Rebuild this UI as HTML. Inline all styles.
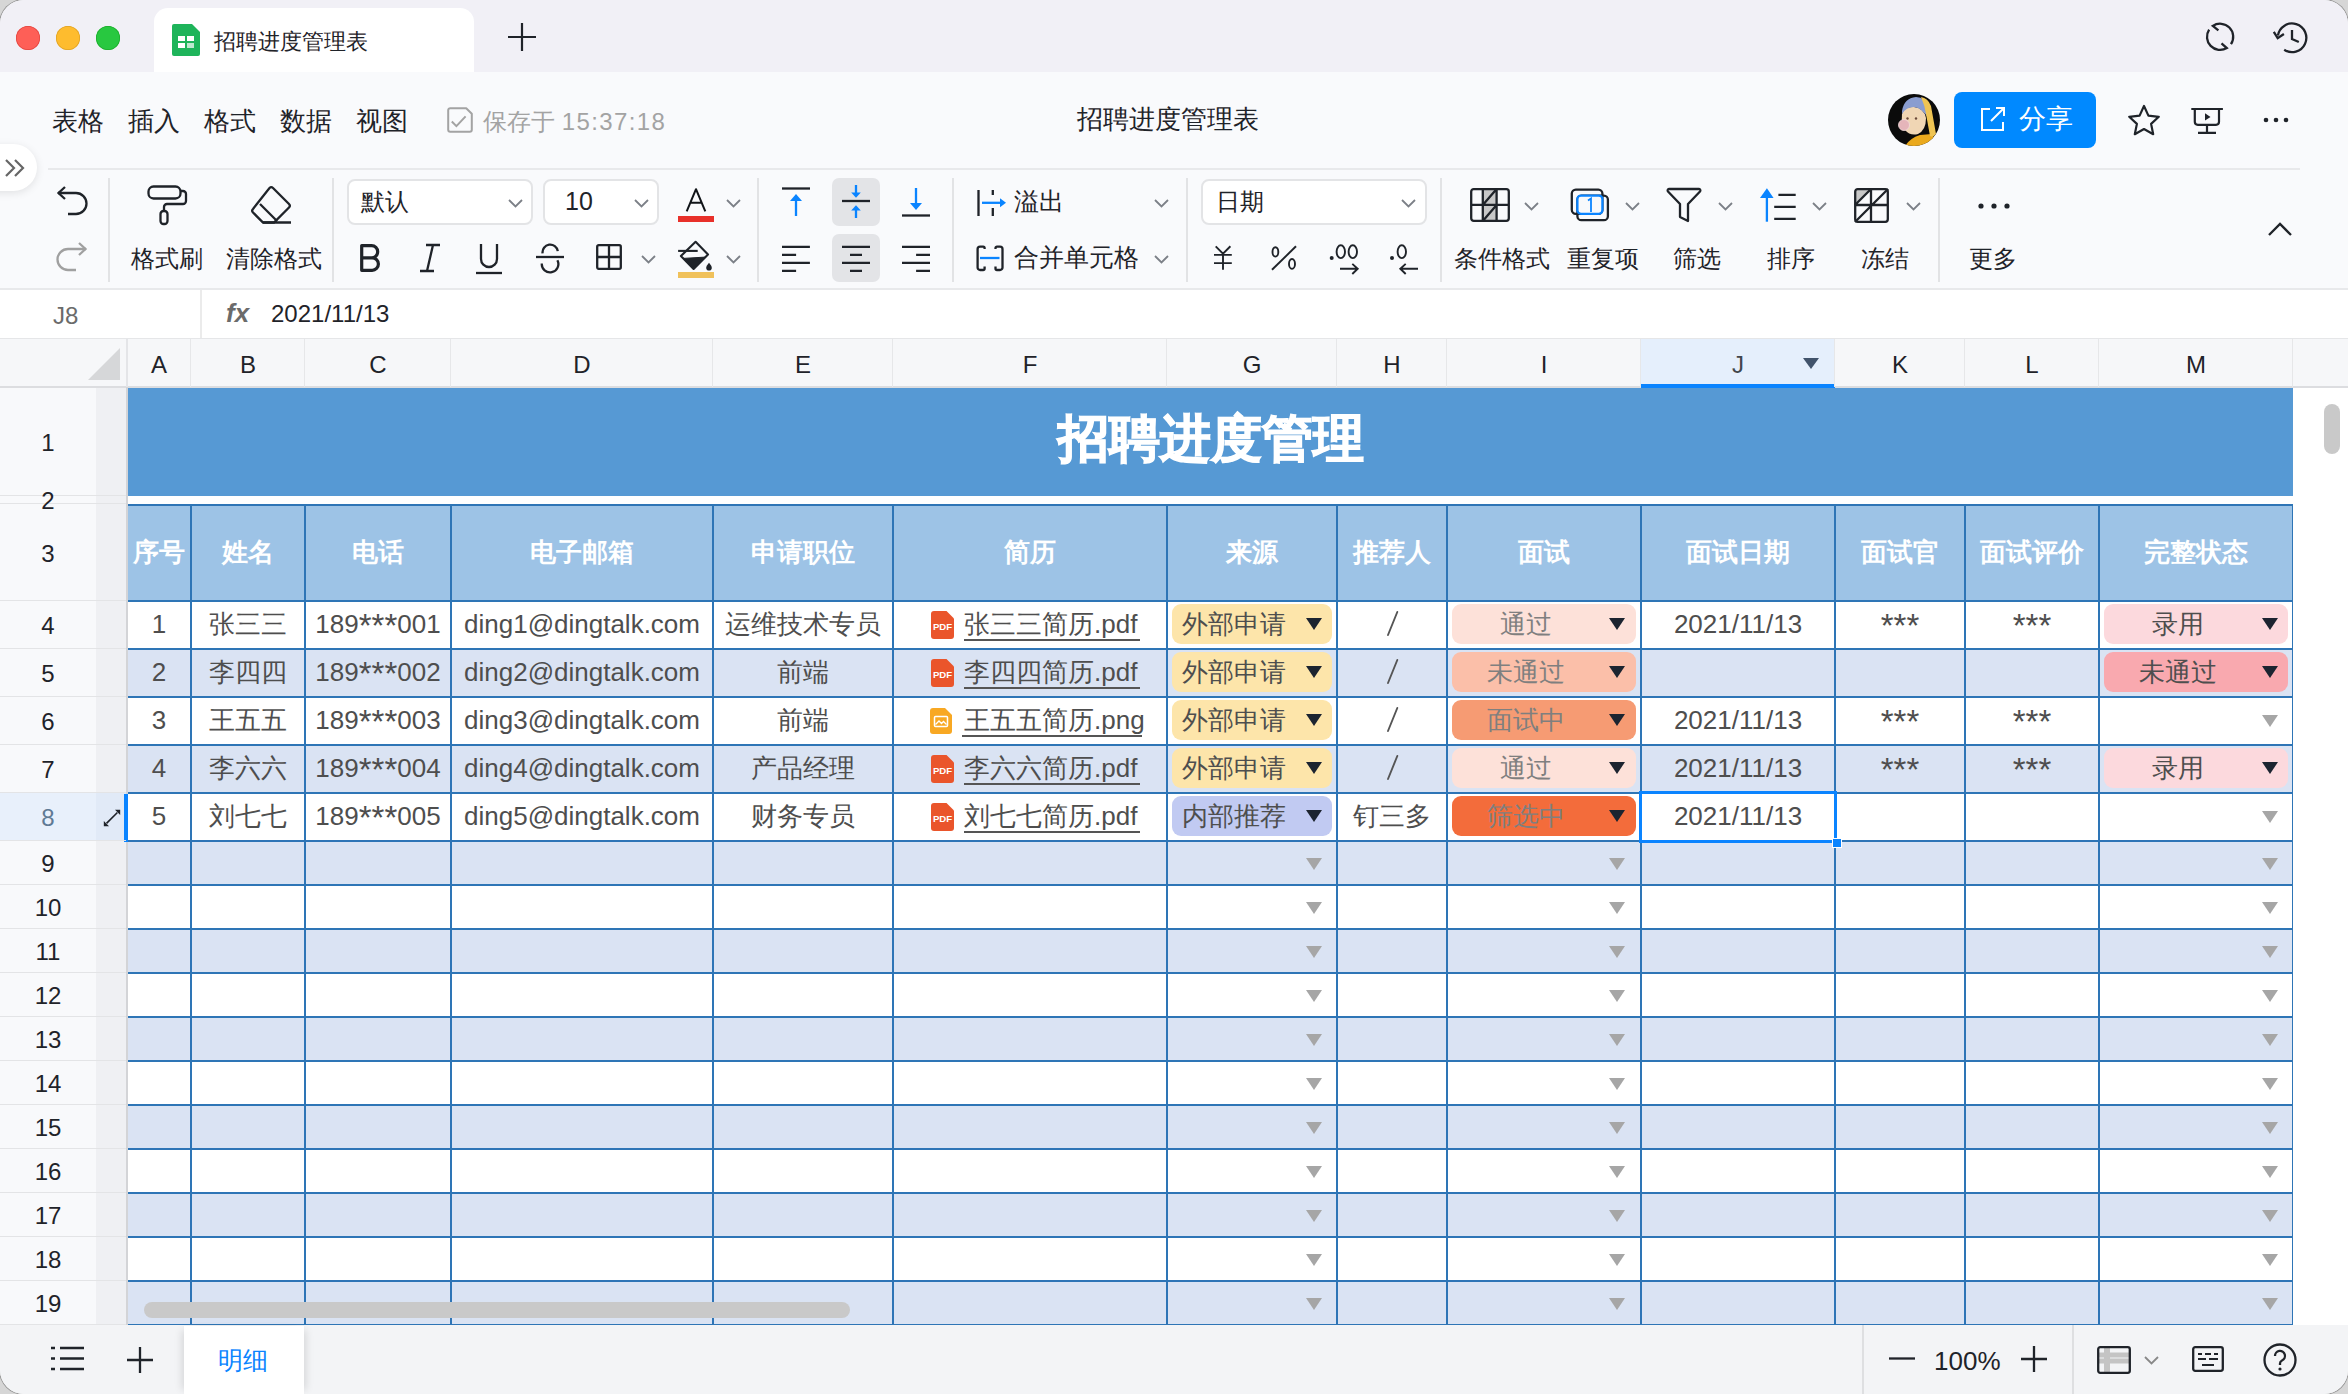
<!DOCTYPE html><html><head><meta charset="utf-8"><style>
*{box-sizing:border-box;margin:0;padding:0}
html,body{width:2348px;height:1394px;overflow:hidden;background:#d6d6d6;font-family:"Liberation Sans",sans-serif}
#win{position:absolute;left:0;top:0;width:2348px;height:1394px;border-radius:24px;overflow:hidden;background:#f9fafc;box-shadow:0 0 0 1px rgba(0,0,0,0.3)}
.a{position:absolute}
.t{position:absolute;white-space:nowrap;line-height:1}
svg{position:absolute;overflow:visible}
.ast{font-size:33px;vertical-align:-4px;line-height:0}
</style></head><body><div id="win">

<div class="a" style="left:0;top:0;width:2348px;height:72px;background:#f1f0f6"></div>
<div class="a" style="left:16px;top:26px;width:24px;height:24px;border-radius:50%;background:#fe5f57;box-shadow:inset 0 0 0 0.7px #e0443e"></div>
<div class="a" style="left:56px;top:26px;width:24px;height:24px;border-radius:50%;background:#febc2e;box-shadow:inset 0 0 0 0.7px #dea123"></div>
<div class="a" style="left:96px;top:26px;width:24px;height:24px;border-radius:50%;background:#28c840;box-shadow:inset 0 0 0 0.7px #1aab29"></div>
<div class="a" style="left:154px;top:8px;width:320px;height:64px;background:#fff;border-radius:14px 14px 0 0"></div>
<svg style="left:172px;top:24px" width="28" height="32" viewBox="0 0 28 32"><path d="M2 0H20L28 8V30a2 2 0 0 1-2 2H2a2 2 0 0 1-2-2V2a2 2 0 0 1 2-2z" fill="#1eb45a"/><rect x="6" y="12" width="7" height="5" fill="#fff"/><rect x="15" y="12" width="7" height="5" fill="#fff"/><rect x="6" y="19" width="7" height="5" fill="#fff"/><rect x="15" y="19" width="7" height="5" fill="#bfe8cf"/></svg>
<div class="t" style="left:214px;top:31px;font-size:22px;color:#1f2329">招聘进度管理表</div>
<svg style="left:508px;top:23px" width="28" height="28"><path d="M14 0V28M0 14H28" stroke="#1f2329" stroke-width="2.2"/></svg>
<svg style="left:2205px;top:22px" width="30" height="30" viewBox="0 0 30 30"><path d="M13.4 8.4L7.78 3.94A13.1 13.1 0 0 1 25.96 22.12M4.11 7.66A13.1 13.1 0 0 0 21.85 26.03L16.5 21.3" fill="none" stroke="#1f2329" stroke-width="2.3"/></svg>
<svg style="left:2274px;top:21px" width="34" height="34" viewBox="0 0 34 34"><path d="M10.2 28.8A14.3 14.3 0 1 0 3.9 14.5" fill="none" stroke="#1f2329" stroke-width="2.3"/><path d="M-0.2 10.9L3.7 17.2 9.9 13M18 9.1V18L24.8 21" fill="none" stroke="#1f2329" stroke-width="2.3"/></svg>
<div class="t" style="left:52px;top:108px;font-size:26px;color:#1f2329">表格</div>
<div class="t" style="left:128px;top:108px;font-size:26px;color:#1f2329">插入</div>
<div class="t" style="left:204px;top:108px;font-size:26px;color:#1f2329">格式</div>
<div class="t" style="left:280px;top:108px;font-size:26px;color:#1f2329">数据</div>
<div class="t" style="left:356px;top:108px;font-size:26px;color:#1f2329">视图</div>
<svg style="left:447px;top:107px" width="26" height="26" viewBox="0 0 26 26"><path d="M3.2 1.2H19.2L24.8 6.8V22.8A2 2 0 0 1 22.8 24.8H3.2A2 2 0 0 1 1.2 22.8V3.2A2 2 0 0 1 3.2 1.2Z" fill="none" stroke="#a3a3a3" stroke-width="2" stroke-linejoin="round"/><path d="M4.8 14.5L9.4 19.1 18.6 9.4" fill="none" stroke="#a3a3a3" stroke-width="2"/></svg>
<div class="t" style="left:483px;top:110px;font-size:24px;color:#a3a3a3">保存于 <span style="letter-spacing:1.4px">15:37:18</span></div>
<div class="t" style="left:1077px;top:106px;font-size:26px;color:#1f2329">招聘进度管理表</div>
<svg style="left:1888px;top:94px" width="52" height="52" viewBox="0 0 52 52"><defs><clipPath id="cav"><circle cx="26" cy="26" r="26"/></clipPath></defs><g clip-path="url(#cav)"><rect width="52" height="52" fill="#0b0b0b"/><path d="M17 52Q22 44 32 41L44 40Q48 46 45 52Z" fill="#eaa91d"/><path d="M14 20Q16 12 26 13Q36 14 38 24Q38 36 30 40Q22 42 17 36Q13 30 14 20Z" fill="#f0d6b4"/><path d="M14 17Q16 4 28 3Q38 3 40 14L40 24Q34 14 26 13Q18 13 14 20Z" fill="#8a9dd0"/><path d="M33 3Q40 4 43 12L48 40Q45 44 42 42L38 20Q37 12 33 3Z" fill="#efc453"/><circle cx="19.5" cy="24.5" r="1.2" fill="#6b4a3a"/><circle cx="28" cy="24.5" r="1.2" fill="#6b4a3a"/><circle cx="16" cy="31" r="5.5" fill="#e5b5ba" stroke="#f3dcdc" stroke-width="0.8"/></g></svg>
<div class="a" style="left:1954px;top:92px;width:142px;height:56px;border-radius:8px;background:#0089ff"></div>
<svg style="left:1980px;top:106px" width="26" height="26" viewBox="0 0 26 26"><path d="M10 3H2V24H23V16" fill="none" stroke="#fff" stroke-width="2"/><path d="M11 15L24 2M16 2H24V10" fill="none" stroke="#fff" stroke-width="2"/></svg>
<div class="t" style="left:2019px;top:106px;font-size:27px;color:#fff">分享</div>
<svg style="left:2127px;top:104px" width="34" height="34" viewBox="0 0 34 34"><path d="M17 2l4.4 9.6 10.4 1.2-7.7 7.1 2.1 10.3L17 25l-9.2 5.2 2.1-10.3L2.2 12.8l10.4-1.2z" fill="none" stroke="#1f2329" stroke-width="2.2" stroke-linejoin="round"/></svg>
<svg style="left:2190px;top:104px" width="34" height="34" viewBox="0 0 34 34"><path d="M1.3 5H32.9M4.8 5V17.8A3 3 0 0 0 7.8 20.8H26A3 3 0 0 0 29 17.8V5M17 20.8V28.9M8 28.9H26" fill="none" stroke="#1f2329" stroke-width="2.2"/><path d="M15 9.3V16.6L20.5 13z" fill="#1f2329"/></svg>
<svg style="left:2263px;top:117px" width="28" height="6"><circle cx="3" cy="3" r="2.3" fill="#1f2329"/><circle cx="13" cy="3" r="2.3" fill="#1f2329"/><circle cx="23" cy="3" r="2.3" fill="#1f2329"/></svg>
<div class="a" style="left:-30px;top:144px;width:67px;height:47px;border-radius:23.5px;background:#fff;box-shadow:0 2px 8px rgba(0,0,0,0.10)"></div>
<svg style="left:5px;top:159px" width="20" height="18" viewBox="0 0 20 18"><path d="M1 1l8 8-8 8M10 1l8 8-8 8" fill="none" stroke="#666" stroke-width="2.2"/></svg>
<div class="a" style="left:48px;top:168px;width:2252px;height:2px;background:#e8e9eb"></div>
<div class="a" style="left:0;top:288px;width:2348px;height:2px;background:#e8e9eb"></div>
<div class="a" style="left:108px;top:178px;width:2px;height:104px;background:#e2e3e5"></div>
<div class="a" style="left:332px;top:178px;width:2px;height:104px;background:#e2e3e5"></div>
<div class="a" style="left:757px;top:178px;width:2px;height:104px;background:#e2e3e5"></div>
<div class="a" style="left:952px;top:178px;width:2px;height:104px;background:#e2e3e5"></div>
<div class="a" style="left:1186px;top:178px;width:2px;height:104px;background:#e2e3e5"></div>
<div class="a" style="left:1440px;top:178px;width:2px;height:104px;background:#e2e3e5"></div>
<div class="a" style="left:1938px;top:178px;width:2px;height:104px;background:#e2e3e5"></div>
<svg style="left:56px;top:186px" width="32" height="30" viewBox="0 0 32 30"><path d="M2 7H20A10 10 0 0 1 20 28H12" fill="none" stroke="#1f2329" stroke-width="2.3"/><path d="M9 1L2.5 7 9 13" fill="none" stroke="#1f2329" stroke-width="2.3"/></svg>
<svg style="left:56px;top:242px" width="32" height="30" viewBox="0 0 32 30"><path d="M30 7H12A10 10 0 0 0 12 28H20" fill="none" stroke="#a0a0a0" stroke-width="2.3"/><path d="M23 1L29.5 7 23 13" fill="none" stroke="#a0a0a0" stroke-width="2.3"/></svg>
<svg style="left:147px;top:185px" width="42" height="42" viewBox="0 0 42 42"><rect x="1.5" y="1.5" width="32" height="12" rx="5" fill="none" stroke="#1f2329" stroke-width="2.3"/><path d="M34 6H36a3 3 0 0 1 3 3V16a3 3 0 0 1-3 3H20a3 3 0 0 0-3 3V26" fill="none" stroke="#1f2329" stroke-width="2.3"/><rect x="13.5" y="26" width="7" height="13" rx="3" fill="none" stroke="#1f2329" stroke-width="2.3"/></svg>
<div class="t" style="left:131px;top:247px;font-size:24px;color:#1f2329">格式刷</div>
<svg style="left:251px;top:186px" width="42" height="40" viewBox="0 0 42 40"><path d="M22 2L38 18a2.5 2.5 0 0 1 0 3.5L23 36.5H12L2 26.5a2.5 2.5 0 0 1 0-3.5L18.5 2a2.5 2.5 0 0 1 3.5 0z" fill="none" stroke="#1f2329" stroke-width="2.3"/><path d="M9 18L26 35M12 36.5H40" fill="none" stroke="#1f2329" stroke-width="2.3"/></svg>
<div class="t" style="left:226px;top:247px;font-size:24px;color:#1f2329">清除格式</div>
<div class="a" style="left:347px;top:179px;width:186px;height:46px;border:2px solid #e3e4e6;border-radius:8px;background:#fff"></div>
<div class="t" style="left:361px;top:190px;font-size:24px;color:#1f2329">默认</div>
<svg style="left:508px;top:199px" width="15" height="9" viewBox="0 0 15 9"><path d="M1 1l6.5 6.5L14 1" fill="none" stroke="#7c8087" stroke-width="1.8"/></svg>
<div class="a" style="left:543px;top:179px;width:116px;height:46px;border:2px solid #e3e4e6;border-radius:8px;background:#fff"></div>
<div class="t" style="left:565px;top:189px;font-size:25px;color:#1f2329">10</div>
<svg style="left:634px;top:199px" width="15" height="9" viewBox="0 0 15 9"><path d="M1 1l6.5 6.5L14 1" fill="none" stroke="#7c8087" stroke-width="1.8"/></svg>
<svg style="left:680px;top:186px" width="32" height="28" viewBox="0 0 32 28"><path d="M6.7 25.4L16 3.2 25.3 25.4M10.2 16.8H21.8" fill="none" stroke="#111418" stroke-width="2" stroke-linejoin="round"/></svg>
<div class="a" style="left:678px;top:216px;width:36px;height:6px;background:#e8302a"></div>
<svg style="left:726px;top:199px" width="15" height="9" viewBox="0 0 15 9"><path d="M1 1l6.5 6.5L14 1" fill="none" stroke="#7c8087" stroke-width="1.8"/></svg>
<svg style="left:358px;top:242px" width="26" height="32" viewBox="0 0 26 32"><path d="M3.7 3.6H13.6A6.1 6.1 0 0 1 13.6 15.8H3.7ZM3.7 15.8H14.15A6.25 6.25 0 0 1 14.15 28.3H3.7Z" fill="none" stroke="#1f2329" stroke-width="3.2" stroke-linejoin="round"/></svg>
<svg style="left:418px;top:244px" width="24" height="28" viewBox="0 0 24 28"><path d="M8 1H22M2 27H16M15 1L9 27" fill="none" stroke="#1f2329" stroke-width="2.3"/></svg>
<svg style="left:475px;top:244px" width="28" height="32" viewBox="0 0 28 32"><path d="M6 0V15A8 8 0 0 0 22 15V0" fill="none" stroke="#1f2329" stroke-width="2.3"/><path d="M1 29H27" stroke="#1f2329" stroke-width="2.3"/></svg>
<svg style="left:535px;top:243px" width="30" height="30" viewBox="0 0 30 30"><path d="M22.8 8.2A7.3 7.3 0 1 0 7.6 10.4M6.8 20.5A8.3 8.3 0 1 0 22.4 17.2" fill="none" stroke="#1f2329" stroke-width="2.3"/><path d="M1 14H29" stroke="#1f2329" stroke-width="2.3"/></svg>
<svg style="left:596px;top:244px" width="26" height="26" viewBox="0 0 26 26"><rect x="1.2" y="1.2" width="23.6" height="23.6" rx="1.5" fill="none" stroke="#1f2329" stroke-width="2.3"/><path d="M13 1V25M1 13H25" stroke="#1f2329" stroke-width="2.3"/></svg>
<svg style="left:641px;top:255px" width="15" height="9" viewBox="0 0 15 9"><path d="M1 1l6.5 6.5L14 1" fill="none" stroke="#7c8087" stroke-width="1.8"/></svg>
<svg style="left:677px;top:240px" width="38" height="32" viewBox="0 0 38 32"><path d="M6.2 18.4L28.3 17.1 16.6 29z" fill="#1f2329" stroke="#1f2329" stroke-width="1" stroke-linejoin="round"/><path d="M18.6 1.8L31 14.5 16.6 29 3.9 16.1Z" fill="none" stroke="#1f2329" stroke-width="2.1" stroke-linejoin="round"/><path d="M1.1 10.9H20.7" stroke="#1f2329" stroke-width="2.1"/><path d="M32 22.7q-2.8 3.2-2.8 5a2.8 2.8 0 0 0 5.6 0q0-1.8-2.8-5z" fill="#1f2329"/></svg>
<div class="a" style="left:678px;top:272px;width:36px;height:6px;background:#f0c15b"></div>
<svg style="left:726px;top:255px" width="15" height="9" viewBox="0 0 15 9"><path d="M1 1l6.5 6.5L14 1" fill="none" stroke="#7c8087" stroke-width="1.8"/></svg>
<div class="a" style="left:832px;top:178px;width:48px;height:48px;border-radius:7px;background:#e3e4e7"></div>
<div class="a" style="left:832px;top:234px;width:48px;height:48px;border-radius:7px;background:#e3e4e7"></div>
<svg style="left:781px;top:187px" width="30" height="30" viewBox="0 0 30 30"><path d="M1 1.5H29" stroke="#1f2329" stroke-width="2.3"/><path d="M15 10V29" stroke="#0a84ff" stroke-width="2.3"/><path d="M9 14l6-7 6 7z" fill="#0a84ff"/></svg>
<svg style="left:841px;top:184px" width="30" height="36" viewBox="0 0 30 36"><path d="M1 17H29" stroke="#1f2329" stroke-width="2.3"/><path d="M15 1V10M15 25V34" stroke="#0a84ff" stroke-width="2.3"/><path d="M10.2 8.5L15 13.7 19.8 8.5z" fill="#0a84ff"/><path d="M10.2 26.5L15 21.3 19.8 26.5z" fill="#0a84ff"/></svg>
<svg style="left:901px;top:187px" width="30" height="30" viewBox="0 0 30 30"><path d="M1 28.5H29" stroke="#1f2329" stroke-width="2.3"/><path d="M15 1V20" stroke="#0a84ff" stroke-width="2.3"/><path d="M9 16l6 7 6-7z" fill="#0a84ff"/></svg>
<svg style="left:781px;top:245px" width="30" height="28" viewBox="0 0 30 28"><path d="M1 1.9H28.9M1 9.9H15.1M1 17.9H28.9M1 25.9H15.1" stroke="#1f2329" stroke-width="2.3"/></svg>
<svg style="left:841px;top:245px" width="30" height="28" viewBox="0 0 30 28"><path d="M1 1.9H29M9 9.9H21M1 17.9H29M9 25.9H21" stroke="#1f2329" stroke-width="2.3"/></svg>
<svg style="left:901px;top:245px" width="30" height="28" viewBox="0 0 30 28"><path d="M1 1.9H29M15.1 9.9H29M1 17.9H29M15.1 25.9H29" stroke="#1f2329" stroke-width="2.3"/></svg>
<svg style="left:977px;top:189px" width="30" height="28" viewBox="0 0 30 28"><path d="M1.5 1.1V26.9M15.8 1.1V6M15.8 19V26.9" stroke="#1f2329" stroke-width="2.3"/><path d="M5 13.8H24" stroke="#0a84ff" stroke-width="2.3"/><path d="M23 9.3L29 13.8 23 18.3z" fill="#0a84ff"/></svg>
<div class="t" style="left:1014px;top:189px;font-size:25px;color:#1f2329">溢出</div>
<svg style="left:1154px;top:199px" width="15" height="9" viewBox="0 0 15 9"><path d="M1 1l6.5 6.5L14 1" fill="none" stroke="#7c8087" stroke-width="1.8"/></svg>
<svg style="left:976px;top:244px" width="30" height="30" viewBox="0 0 30 30"><path d="M8.6 5.1V4.1A1.5 1.5 0 0 0 7.1 2.6H4.1A2.5 2.5 0 0 0 1.6 5.1V23.5A2.5 2.5 0 0 0 4.1 26H7.1A1.5 1.5 0 0 0 8.6 24.5V22.5M19.5 5.1V4.1A1.5 1.5 0 0 1 21 2.6H24A2.5 2.5 0 0 1 26.5 5.1V23.5A2.5 2.5 0 0 1 24 26H21A1.5 1.5 0 0 1 19.5 24.5V22.5" fill="none" stroke="#1f2329" stroke-width="2.3"/><path d="M4 14H23.5" stroke="#0a84ff" stroke-width="2.3"/></svg>
<div class="t" style="left:1014px;top:245px;font-size:25px;color:#1f2329">合并单元格</div>
<svg style="left:1154px;top:255px" width="15" height="9" viewBox="0 0 15 9"><path d="M1 1l6.5 6.5L14 1" fill="none" stroke="#7c8087" stroke-width="1.8"/></svg>
<div class="a" style="left:1201px;top:179px;width:226px;height:46px;border:2px solid #e3e4e6;border-radius:8px;background:#fff"></div>
<div class="t" style="left:1216px;top:190px;font-size:24px;color:#1f2329">日期</div>
<svg style="left:1401px;top:199px" width="15" height="9" viewBox="0 0 15 9"><path d="M1 1l6.5 6.5L14 1" fill="none" stroke="#7c8087" stroke-width="1.8"/></svg>
<svg style="left:1212px;top:244px" width="22" height="28" viewBox="0 0 22 28"><path d="M3.7 2.3L11 9.6 18.4 2.3M11 9.6V25.8M2 10.9H19.8M2 19.1H19.8" fill="none" stroke="#1f2329" stroke-width="1.9"/></svg>
<svg style="left:1268px;top:244px" width="32" height="28" viewBox="0 0 32 28"><ellipse cx="7.4" cy="7.9" rx="2.9" ry="4.7" fill="none" stroke="#1f2329" stroke-width="1.9"/><path d="M28 2.3L4 25.8" stroke="#1f2329" stroke-width="1.9"/><ellipse cx="24" cy="19.9" rx="3" ry="4.9" fill="none" stroke="#1f2329" stroke-width="1.9"/></svg>
<svg style="left:1328px;top:244px" width="32" height="32" viewBox="0 0 32 32"><circle cx="3.7" cy="14" r="2" fill="#1f2329"/><ellipse cx="12.8" cy="7.7" rx="4.2" ry="6.4" fill="none" stroke="#1f2329" stroke-width="1.9"/><ellipse cx="24.8" cy="7.7" rx="4.2" ry="6.4" fill="none" stroke="#1f2329" stroke-width="1.9"/><path d="M12 24.8H29.7M24.3 19.9L29.7 24.8 24.3 30" fill="none" stroke="#1f2329" stroke-width="1.9"/></svg>
<svg style="left:1388px;top:244px" width="32" height="32" viewBox="0 0 32 32"><circle cx="4" cy="14" r="2" fill="#1f2329"/><ellipse cx="13.8" cy="7.7" rx="4.2" ry="6.4" fill="none" stroke="#1f2329" stroke-width="1.9"/><path d="M12.3 24.8H30M17.7 19.9L12.3 24.8 17.7 30" fill="none" stroke="#1f2329" stroke-width="1.9"/></svg>
<svg style="left:1470px;top:188px" width="40" height="34" viewBox="0 0 40 34"><rect x="12.8" y="1" width="13.8" height="32" fill="#c8c8c8"/><rect x="1.2" y="1.2" width="37.6" height="31.6" rx="2.5" fill="none" stroke="#1f2329" stroke-width="2.3"/><path d="M12.8 1V33M26.6 1V33M1 16.9H39M12.8 16.9L26.6 1M12.8 33L26.6 16.9" stroke="#1f2329" stroke-width="2.3"/></svg>
<svg style="left:1524px;top:202px" width="15" height="9" viewBox="0 0 15 9"><path d="M1 1l6.5 6.5L14 1" fill="none" stroke="#7c8087" stroke-width="1.8"/></svg>
<div class="t" style="left:1454px;top:247px;font-size:24px;color:#1f2329">条件格式</div>
<svg style="left:1569px;top:187px" width="42" height="36" viewBox="0 0 42 36"><rect x="2.8" y="2.6" width="30.6" height="24.2" rx="4" fill="none" stroke="#1f2329" stroke-width="2.3"/><rect x="8.4" y="8.6" width="30.5" height="24.6" rx="4" fill="none" stroke="#1f2329" stroke-width="2.3"/><rect x="8.4" y="8.6" width="25" height="18.2" rx="3.5" fill="#f8f9fb" stroke="#0a84ff" stroke-width="2.3"/><path d="M19 13.5L22 11.5V25" fill="none" stroke="#0a84ff" stroke-width="1.8"/></svg>
<svg style="left:1625px;top:202px" width="15" height="9" viewBox="0 0 15 9"><path d="M1 1l6.5 6.5L14 1" fill="none" stroke="#7c8087" stroke-width="1.8"/></svg>
<div class="t" style="left:1567px;top:247px;font-size:24px;color:#1f2329">重复项</div>
<svg style="left:1666px;top:187px" width="36" height="36" viewBox="0 0 36 36"><path d="M3 2H33a1.5 1.5 0 0 1 1 2.5L22 17V34L14 30V17L2 4.5A1.5 1.5 0 0 1 3 2z" fill="none" stroke="#1f2329" stroke-width="2.3" stroke-linejoin="round"/></svg>
<svg style="left:1718px;top:202px" width="15" height="9" viewBox="0 0 15 9"><path d="M1 1l6.5 6.5L14 1" fill="none" stroke="#7c8087" stroke-width="1.8"/></svg>
<div class="t" style="left:1673px;top:247px;font-size:24px;color:#1f2329">筛选</div>
<svg style="left:1759px;top:188px" width="38" height="36" viewBox="0 0 38 36"><path d="M7.9 8V33.7" stroke="#0a84ff" stroke-width="2.3"/><path d="M1 10L7.9 0.3 14.6 10z" fill="#0a84ff"/><path d="M19.4 6.9H36.7M15.2 18.8H36.7M15.2 30.8H36.7" stroke="#1f2329" stroke-width="2.3"/></svg>
<svg style="left:1812px;top:202px" width="15" height="9" viewBox="0 0 15 9"><path d="M1 1l6.5 6.5L14 1" fill="none" stroke="#7c8087" stroke-width="1.8"/></svg>
<div class="t" style="left:1767px;top:247px;font-size:24px;color:#1f2329">排序</div>
<svg style="left:1854px;top:188px" width="35" height="35" viewBox="0 0 35 35"><path d="M1 17V1H17z" fill="#c8c8c8"/><rect x="1.2" y="1.2" width="32.6" height="32.6" rx="2.5" fill="none" stroke="#1f2329" stroke-width="2.3"/><path d="M17 1V34M1 17H34M1 34L34 1M1 17L17 1" stroke="#1f2329" stroke-width="2.3"/></svg>
<svg style="left:1906px;top:202px" width="15" height="9" viewBox="0 0 15 9"><path d="M1 1l6.5 6.5L14 1" fill="none" stroke="#7c8087" stroke-width="1.8"/></svg>
<div class="t" style="left:1861px;top:247px;font-size:24px;color:#1f2329">冻结</div>
<svg style="left:1978px;top:203px" width="32" height="6"><circle cx="3" cy="3" r="2.6" fill="#1f2329"/><circle cx="16" cy="3" r="2.6" fill="#1f2329"/><circle cx="29" cy="3" r="2.6" fill="#1f2329"/></svg>
<div class="t" style="left:1969px;top:247px;font-size:24px;color:#1f2329">更多</div>
<svg style="left:2268px;top:222px" width="24" height="14" viewBox="0 0 24 14"><path d="M1 13L12 2 23 13" fill="none" stroke="#1f2329" stroke-width="2.3"/></svg>
<div class="a" style="left:0;top:290px;width:2348px;height:48px;background:#fff"></div>
<div class="a" style="left:200px;top:290px;width:2px;height:48px;background:#ebebeb"></div>
<div class="t" style="left:53px;top:304px;font-size:24px;color:#6b6b6b">J8</div>
<div class="t" style="left:226px;top:300px;font-size:26px;font-style:italic;font-weight:bold;color:#6b6b6b">fx</div>
<div class="t" style="left:271px;top:302px;font-size:24px;color:#1f2329">2021/11/13</div>
<div class="a" style="left:0;top:338px;width:2348px;height:1px;background:#e5e6e8"></div>
<div class="a" style="left:0;top:339px;width:2348px;height:48px;background:#f6f7f9"></div>
<div class="a" style="left:0;top:386px;width:2348px;height:2px;background:#dcdde0"></div>
<svg style="left:88px;top:348px" width="32" height="32"><path d="M32 0V32H0z" fill="#d6d7d9"/></svg>
<div class="a" style="left:1641px;top:339px;width:194px;height:48px;background:#e5effc"></div>
<div class="a" style="left:1641px;top:384px;width:194px;height:4px;background:#0a84ff"></div>
<div class="t" style="left:128px;top:353px;width:62px;text-align:center;font-size:24px;color:#1f2329">A</div>
<div class="a" style="left:190px;top:339px;width:1px;height:48px;background:#e6e7e9"></div>
<div class="t" style="left:192px;top:353px;width:112px;text-align:center;font-size:24px;color:#1f2329">B</div>
<div class="a" style="left:304px;top:339px;width:1px;height:48px;background:#e6e7e9"></div>
<div class="t" style="left:306px;top:353px;width:144px;text-align:center;font-size:24px;color:#1f2329">C</div>
<div class="a" style="left:450px;top:339px;width:1px;height:48px;background:#e6e7e9"></div>
<div class="t" style="left:452px;top:353px;width:260px;text-align:center;font-size:24px;color:#1f2329">D</div>
<div class="a" style="left:712px;top:339px;width:1px;height:48px;background:#e6e7e9"></div>
<div class="t" style="left:714px;top:353px;width:178px;text-align:center;font-size:24px;color:#1f2329">E</div>
<div class="a" style="left:892px;top:339px;width:1px;height:48px;background:#e6e7e9"></div>
<div class="t" style="left:894px;top:353px;width:272px;text-align:center;font-size:24px;color:#1f2329">F</div>
<div class="a" style="left:1166px;top:339px;width:1px;height:48px;background:#e6e7e9"></div>
<div class="t" style="left:1168px;top:353px;width:168px;text-align:center;font-size:24px;color:#1f2329">G</div>
<div class="a" style="left:1336px;top:339px;width:1px;height:48px;background:#e6e7e9"></div>
<div class="t" style="left:1338px;top:353px;width:108px;text-align:center;font-size:24px;color:#1f2329">H</div>
<div class="a" style="left:1446px;top:339px;width:1px;height:48px;background:#e6e7e9"></div>
<div class="t" style="left:1448px;top:353px;width:192px;text-align:center;font-size:24px;color:#1f2329">I</div>
<div class="a" style="left:1640px;top:339px;width:1px;height:48px;background:#e6e7e9"></div>
<div class="t" style="left:1642px;top:353px;width:192px;text-align:center;font-size:24px;color:#41464b">J</div>
<div class="a" style="left:1834px;top:339px;width:1px;height:48px;background:#e6e7e9"></div>
<div class="t" style="left:1836px;top:353px;width:128px;text-align:center;font-size:24px;color:#1f2329">K</div>
<div class="a" style="left:1964px;top:339px;width:1px;height:48px;background:#e6e7e9"></div>
<div class="t" style="left:1966px;top:353px;width:132px;text-align:center;font-size:24px;color:#1f2329">L</div>
<div class="a" style="left:2098px;top:339px;width:1px;height:48px;background:#e6e7e9"></div>
<div class="t" style="left:2100px;top:353px;width:192px;text-align:center;font-size:24px;color:#1f2329">M</div>
<div class="a" style="left:2292px;top:339px;width:1px;height:48px;background:#e6e7e9"></div>
<svg style="left:1803px;top:358px" width="16" height="11"><path d="M0 0H16L8 11z" fill="#41536b"/></svg>
<div class="a" style="left:0;top:388px;width:96px;height:937px;background:#f8f9fb"></div>
<div class="a" style="left:96px;top:388px;width:30px;height:937px;background:#eff0f3"></div>
<div class="a" style="left:126px;top:339px;width:2px;height:48px;background:#e4e5e8"></div>
<div class="a" style="left:126px;top:387px;width:2px;height:938px;background:#d3d4d7"></div>
<div class="a" style="left:0;top:793px;width:96px;height:48px;background:#e8f0fb"></div>
<div class="a" style="left:96px;top:793px;width:30px;height:48px;background:#e1eaf7"></div>
<div class="a" style="left:124px;top:794px;width:4px;height:48px;background:#0a84ff"></div>
<div class="a" style="left:0;top:495px;width:126px;height:1px;background:#e3e4e6"></div>
<div class="t" style="left:0;top:431.4px;width:96px;text-align:center;font-size:24px;color:#1f2329">1</div>
<div class="a" style="left:0;top:503px;width:126px;height:1px;background:#e3e4e6"></div>
<div class="t" style="left:0;top:489.4px;width:96px;text-align:center;font-size:24px;color:#1f2329">2</div>
<div class="a" style="left:0;top:600px;width:126px;height:1px;background:#e3e4e6"></div>
<div class="t" style="left:0;top:541.9px;width:96px;text-align:center;font-size:24px;color:#1f2329">3</div>
<div class="a" style="left:0;top:648px;width:126px;height:1px;background:#e3e4e6"></div>
<div class="t" style="left:0;top:614.4px;width:96px;text-align:center;font-size:24px;color:#1f2329">4</div>
<div class="a" style="left:0;top:696px;width:126px;height:1px;background:#e3e4e6"></div>
<div class="t" style="left:0;top:662.4px;width:96px;text-align:center;font-size:24px;color:#1f2329">5</div>
<div class="a" style="left:0;top:744px;width:126px;height:1px;background:#e3e4e6"></div>
<div class="t" style="left:0;top:710.4px;width:96px;text-align:center;font-size:24px;color:#1f2329">6</div>
<div class="a" style="left:0;top:792px;width:126px;height:1px;background:#e3e4e6"></div>
<div class="t" style="left:0;top:758.4px;width:96px;text-align:center;font-size:24px;color:#1f2329">7</div>
<div class="a" style="left:0;top:840px;width:126px;height:1px;background:#e3e4e6"></div>
<div class="t" style="left:0;top:806.4px;width:96px;text-align:center;font-size:24px;color:#5f7a94">8</div>
<div class="a" style="left:0;top:884px;width:126px;height:1px;background:#e3e4e6"></div>
<div class="t" style="left:0;top:852.4px;width:96px;text-align:center;font-size:24px;color:#1f2329">9</div>
<div class="a" style="left:0;top:928px;width:126px;height:1px;background:#e3e4e6"></div>
<div class="t" style="left:0;top:896.4px;width:96px;text-align:center;font-size:24px;color:#1f2329">10</div>
<div class="a" style="left:0;top:972px;width:126px;height:1px;background:#e3e4e6"></div>
<div class="t" style="left:0;top:940.4px;width:96px;text-align:center;font-size:24px;color:#1f2329">11</div>
<div class="a" style="left:0;top:1016px;width:126px;height:1px;background:#e3e4e6"></div>
<div class="t" style="left:0;top:984.4px;width:96px;text-align:center;font-size:24px;color:#1f2329">12</div>
<div class="a" style="left:0;top:1060px;width:126px;height:1px;background:#e3e4e6"></div>
<div class="t" style="left:0;top:1028.4px;width:96px;text-align:center;font-size:24px;color:#1f2329">13</div>
<div class="a" style="left:0;top:1104px;width:126px;height:1px;background:#e3e4e6"></div>
<div class="t" style="left:0;top:1072.4px;width:96px;text-align:center;font-size:24px;color:#1f2329">14</div>
<div class="a" style="left:0;top:1148px;width:126px;height:1px;background:#e3e4e6"></div>
<div class="t" style="left:0;top:1116.4px;width:96px;text-align:center;font-size:24px;color:#1f2329">15</div>
<div class="a" style="left:0;top:1192px;width:126px;height:1px;background:#e3e4e6"></div>
<div class="t" style="left:0;top:1160.4px;width:96px;text-align:center;font-size:24px;color:#1f2329">16</div>
<div class="a" style="left:0;top:1236px;width:126px;height:1px;background:#e3e4e6"></div>
<div class="t" style="left:0;top:1204.4px;width:96px;text-align:center;font-size:24px;color:#1f2329">17</div>
<div class="a" style="left:0;top:1280px;width:126px;height:1px;background:#e3e4e6"></div>
<div class="t" style="left:0;top:1248.4px;width:96px;text-align:center;font-size:24px;color:#1f2329">18</div>
<div class="a" style="left:0;top:1324px;width:126px;height:1px;background:#e3e4e6"></div>
<div class="t" style="left:0;top:1292.4px;width:96px;text-align:center;font-size:24px;color:#1f2329">19</div>
<svg style="left:102px;top:808px" width="20" height="20" viewBox="0 0 20 20"><path d="M4.5 15.4L15.4 4.5" stroke="#1f2329" stroke-width="1.6"/><path d="M18.2 1.8L13 1.8 18.2 7z" fill="#1f2329"/><path d="M1.8 18.2L1.8 13 7 18.2z" fill="#1f2329"/></svg>
<div class="a" style="left:128px;top:388px;width:2165px;height:108px;background:#5699d4"></div>
<div class="a" style="left:128px;top:496px;width:2165px;height:8px;background:#fff"></div>
<div class="t" style="left:128px;top:413px;width:2165px;text-align:center;font-size:51px;font-weight:bold;color:#fff;-webkit-text-stroke:1.2px #fff">招聘进度管理</div>
<div class="a" style="left:128px;top:504px;width:2165px;height:97px;background:#9dc3e6"></div>
<div class="a" style="left:128px;top:601px;width:2165px;height:48px;background:#fff"></div>
<div class="a" style="left:128px;top:649px;width:2165px;height:48px;background:#dae3f3"></div>
<div class="a" style="left:128px;top:697px;width:2165px;height:48px;background:#fff"></div>
<div class="a" style="left:128px;top:745px;width:2165px;height:48px;background:#dae3f3"></div>
<div class="a" style="left:128px;top:793px;width:2165px;height:48px;background:#fff"></div>
<div class="a" style="left:128px;top:841px;width:2165px;height:44px;background:#dae3f3"></div>
<div class="a" style="left:128px;top:885px;width:2165px;height:44px;background:#fff"></div>
<div class="a" style="left:128px;top:929px;width:2165px;height:44px;background:#dae3f3"></div>
<div class="a" style="left:128px;top:973px;width:2165px;height:44px;background:#fff"></div>
<div class="a" style="left:128px;top:1017px;width:2165px;height:44px;background:#dae3f3"></div>
<div class="a" style="left:128px;top:1061px;width:2165px;height:44px;background:#fff"></div>
<div class="a" style="left:128px;top:1105px;width:2165px;height:44px;background:#dae3f3"></div>
<div class="a" style="left:128px;top:1149px;width:2165px;height:44px;background:#fff"></div>
<div class="a" style="left:128px;top:1193px;width:2165px;height:44px;background:#dae3f3"></div>
<div class="a" style="left:128px;top:1237px;width:2165px;height:44px;background:#fff"></div>
<div class="a" style="left:128px;top:1281px;width:2165px;height:44px;background:#dae3f3"></div>
<div class="a" style="left:128px;top:600px;width:2166px;height:2px;background:#2e75b6"></div>
<div class="a" style="left:128px;top:648px;width:2166px;height:2px;background:#2e75b6"></div>
<div class="a" style="left:128px;top:696px;width:2166px;height:2px;background:#2e75b6"></div>
<div class="a" style="left:128px;top:744px;width:2166px;height:2px;background:#2e75b6"></div>
<div class="a" style="left:128px;top:792px;width:2166px;height:2px;background:#2e75b6"></div>
<div class="a" style="left:128px;top:840px;width:2166px;height:2px;background:#2e75b6"></div>
<div class="a" style="left:128px;top:884px;width:2166px;height:2px;background:#2e75b6"></div>
<div class="a" style="left:128px;top:928px;width:2166px;height:2px;background:#2e75b6"></div>
<div class="a" style="left:128px;top:972px;width:2166px;height:2px;background:#2e75b6"></div>
<div class="a" style="left:128px;top:1016px;width:2166px;height:2px;background:#2e75b6"></div>
<div class="a" style="left:128px;top:1060px;width:2166px;height:2px;background:#2e75b6"></div>
<div class="a" style="left:128px;top:1104px;width:2166px;height:2px;background:#2e75b6"></div>
<div class="a" style="left:128px;top:1148px;width:2166px;height:2px;background:#2e75b6"></div>
<div class="a" style="left:128px;top:1192px;width:2166px;height:2px;background:#2e75b6"></div>
<div class="a" style="left:128px;top:1236px;width:2166px;height:2px;background:#2e75b6"></div>
<div class="a" style="left:128px;top:1280px;width:2166px;height:2px;background:#2e75b6"></div>
<div class="a" style="left:128px;top:1324px;width:2166px;height:2px;background:#2e75b6"></div>
<div class="a" style="left:128px;top:504px;width:2166px;height:2px;background:#2e75b6"></div>
<div class="a" style="left:190px;top:504px;width:2px;height:822px;background:#2e75b6"></div>
<div class="a" style="left:304px;top:504px;width:2px;height:822px;background:#2e75b6"></div>
<div class="a" style="left:450px;top:504px;width:2px;height:822px;background:#2e75b6"></div>
<div class="a" style="left:712px;top:504px;width:2px;height:822px;background:#2e75b6"></div>
<div class="a" style="left:892px;top:504px;width:2px;height:822px;background:#2e75b6"></div>
<div class="a" style="left:1166px;top:504px;width:2px;height:822px;background:#2e75b6"></div>
<div class="a" style="left:1336px;top:504px;width:2px;height:822px;background:#2e75b6"></div>
<div class="a" style="left:1446px;top:504px;width:2px;height:822px;background:#2e75b6"></div>
<div class="a" style="left:1640px;top:504px;width:2px;height:822px;background:#2e75b6"></div>
<div class="a" style="left:1834px;top:504px;width:2px;height:822px;background:#2e75b6"></div>
<div class="a" style="left:1964px;top:504px;width:2px;height:822px;background:#2e75b6"></div>
<div class="a" style="left:2098px;top:504px;width:2px;height:822px;background:#2e75b6"></div>
<div class="a" style="left:2292px;top:504px;width:2px;height:822px;background:#2e75b6"></div>
<div class="t" style="left:128px;top:539px;width:62px;text-align:center;font-size:26px;font-weight:bold;color:#fff">序号</div>
<div class="t" style="left:192px;top:539px;width:112px;text-align:center;font-size:26px;font-weight:bold;color:#fff">姓名</div>
<div class="t" style="left:306px;top:539px;width:144px;text-align:center;font-size:26px;font-weight:bold;color:#fff">电话</div>
<div class="t" style="left:452px;top:539px;width:260px;text-align:center;font-size:26px;font-weight:bold;color:#fff">电子邮箱</div>
<div class="t" style="left:714px;top:539px;width:178px;text-align:center;font-size:26px;font-weight:bold;color:#fff">申请职位</div>
<div class="t" style="left:894px;top:539px;width:272px;text-align:center;font-size:26px;font-weight:bold;color:#fff">简历</div>
<div class="t" style="left:1168px;top:539px;width:168px;text-align:center;font-size:26px;font-weight:bold;color:#fff">来源</div>
<div class="t" style="left:1338px;top:539px;width:108px;text-align:center;font-size:26px;font-weight:bold;color:#fff">推荐人</div>
<div class="t" style="left:1448px;top:539px;width:192px;text-align:center;font-size:26px;font-weight:bold;color:#fff">面试</div>
<div class="t" style="left:1642px;top:539px;width:192px;text-align:center;font-size:26px;font-weight:bold;color:#fff">面试日期</div>
<div class="t" style="left:1836px;top:539px;width:128px;text-align:center;font-size:26px;font-weight:bold;color:#fff">面试官</div>
<div class="t" style="left:1966px;top:539px;width:132px;text-align:center;font-size:26px;font-weight:bold;color:#fff">面试评价</div>
<div class="t" style="left:2100px;top:539px;width:192px;text-align:center;font-size:26px;font-weight:bold;color:#fff">完整状态</div>
<div class="t" style="left:128px;top:611px;width:62px;text-align:center;font-size:26px;color:#4e4e4e">1</div>
<div class="t" style="left:192px;top:611px;width:112px;text-align:center;font-size:26px;color:#4e4e4e">张三三</div>
<div class="t" style="left:306px;top:611px;width:144px;text-align:center;font-size:26px;color:#4e4e4e">189<span class="ast">***</span>001</div>
<div class="t" style="left:452px;top:611px;width:260px;text-align:center;font-size:26px;color:#4e4e4e">ding1@dingtalk.com</div>
<div class="t" style="left:714px;top:611px;width:178px;text-align:center;font-size:26px;color:#4e4e4e">运维技术专员</div>
<svg style="left:931px;top:611px" width="23" height="28" viewBox="0 0 23 28"><path d="M3 0H15.5L23 7.5V25a3 3 0 0 1-3 3H3a3 3 0 0 1-3-3V3a3 3 0 0 1 3-3z" fill="#ea552b"/><text x="11.5" y="19.2" font-size="9.6" font-weight="bold" font-family="Liberation Sans" fill="#fff" text-anchor="middle">PDF</text></svg>
<div class="t" style="left:964px;top:611px;font-size:26px;color:#4e4e4e">张三三简历.pdf</div>
<div class="a" style="left:964px;top:639px;width:176px;height:2px;background:#555"></div>
<div class="a" style="left:1172px;top:604px;width:160px;height:40px;border-radius:9px;background:#fde5aa"></div>
<div class="t" style="left:1182px;top:611px;font-size:26px;color:#4e4e4e">外部申请</div>
<svg style="left:1306px;top:618px" width="16" height="12"><path d="M0 0H16L8 12z" fill="#1c2430"/></svg>
<svg style="left:1385px;top:609px" width="16" height="28"><path d="M12.3 3L3 26" stroke="#555" stroke-width="1.9" stroke-linecap="round"/></svg>
<div class="a" style="left:1452px;top:604px;width:184px;height:40px;border-radius:9px;background:#fde1d9"></div>
<div class="t" style="left:1452px;top:611px;width:148px;text-align:center;font-size:26px;color:#7f7f7f">通过</div>
<svg style="left:1609px;top:618px" width="16" height="12"><path d="M0 0H16L8 12z" fill="#1c2430"/></svg>
<div class="t" style="left:1642px;top:611px;width:192px;text-align:center;font-size:26px;color:#4e4e4e">2021/11/13</div>
<div class="t" style="left:1836px;top:611px;width:128px;text-align:center;font-size:26px;color:#4e4e4e"><span class="ast">***</span></div>
<div class="t" style="left:1966px;top:611px;width:132px;text-align:center;font-size:26px;color:#4e4e4e"><span class="ast">***</span></div>
<div class="a" style="left:2104px;top:604px;width:184px;height:40px;border-radius:9px;background:#fcd9dd"></div>
<div class="t" style="left:2104px;top:611px;width:148px;text-align:center;font-size:26px;color:#4e4e4e">录用</div>
<svg style="left:2262px;top:618px" width="16" height="12"><path d="M0 0H16L8 12z" fill="#1c2430"/></svg>
<div class="t" style="left:128px;top:659px;width:62px;text-align:center;font-size:26px;color:#4e4e4e">2</div>
<div class="t" style="left:192px;top:659px;width:112px;text-align:center;font-size:26px;color:#4e4e4e">李四四</div>
<div class="t" style="left:306px;top:659px;width:144px;text-align:center;font-size:26px;color:#4e4e4e">189<span class="ast">***</span>002</div>
<div class="t" style="left:452px;top:659px;width:260px;text-align:center;font-size:26px;color:#4e4e4e">ding2@dingtalk.com</div>
<div class="t" style="left:714px;top:659px;width:178px;text-align:center;font-size:26px;color:#4e4e4e">前端</div>
<svg style="left:931px;top:659px" width="23" height="28" viewBox="0 0 23 28"><path d="M3 0H15.5L23 7.5V25a3 3 0 0 1-3 3H3a3 3 0 0 1-3-3V3a3 3 0 0 1 3-3z" fill="#ea552b"/><text x="11.5" y="19.2" font-size="9.6" font-weight="bold" font-family="Liberation Sans" fill="#fff" text-anchor="middle">PDF</text></svg>
<div class="t" style="left:964px;top:659px;font-size:26px;color:#4e4e4e">李四四简历.pdf</div>
<div class="a" style="left:964px;top:687px;width:176px;height:2px;background:#555"></div>
<div class="a" style="left:1172px;top:652px;width:160px;height:40px;border-radius:9px;background:#fde5aa"></div>
<div class="t" style="left:1182px;top:659px;font-size:26px;color:#4e4e4e">外部申请</div>
<svg style="left:1306px;top:666px" width="16" height="12"><path d="M0 0H16L8 12z" fill="#1c2430"/></svg>
<svg style="left:1385px;top:657px" width="16" height="28"><path d="M12.3 3L3 26" stroke="#555" stroke-width="1.9" stroke-linecap="round"/></svg>
<div class="a" style="left:1452px;top:652px;width:184px;height:40px;border-radius:9px;background:#fbbfa9"></div>
<div class="t" style="left:1452px;top:659px;width:148px;text-align:center;font-size:26px;color:#7f7f7f">未通过</div>
<svg style="left:1609px;top:666px" width="16" height="12"><path d="M0 0H16L8 12z" fill="#1c2430"/></svg>
<div class="a" style="left:2104px;top:652px;width:184px;height:40px;border-radius:9px;background:#f9a9af"></div>
<div class="t" style="left:2104px;top:659px;width:148px;text-align:center;font-size:26px;color:#4e4e4e">未通过</div>
<svg style="left:2262px;top:666px" width="16" height="12"><path d="M0 0H16L8 12z" fill="#1c2430"/></svg>
<div class="t" style="left:128px;top:707px;width:62px;text-align:center;font-size:26px;color:#4e4e4e">3</div>
<div class="t" style="left:192px;top:707px;width:112px;text-align:center;font-size:26px;color:#4e4e4e">王五五</div>
<div class="t" style="left:306px;top:707px;width:144px;text-align:center;font-size:26px;color:#4e4e4e">189<span class="ast">***</span>003</div>
<div class="t" style="left:452px;top:707px;width:260px;text-align:center;font-size:26px;color:#4e4e4e">ding3@dingtalk.com</div>
<div class="t" style="left:714px;top:707px;width:178px;text-align:center;font-size:26px;color:#4e4e4e">前端</div>
<svg style="left:930px;top:708px" width="22" height="26" viewBox="0 0 22 26"><path d="M3 0H15L22 7V23a3 3 0 0 1-3 3H3a3 3 0 0 1-3-3V3a3 3 0 0 1 3-3z" fill="#f8a823"/><rect x="4.5" y="8.5" width="13" height="10" rx="1" fill="none" stroke="#fff" stroke-width="1.5"/><path d="M5.5 16.5l3.5-3.5 2.5 2.5 2-2 3 3" fill="none" stroke="#fff" stroke-width="1.3"/></svg>
<div class="t" style="left:964px;top:707px;font-size:26px;color:#4e4e4e">王五五简历.png</div>
<div class="a" style="left:962px;top:735px;width:180px;height:2px;background:#555"></div>
<div class="a" style="left:1172px;top:700px;width:160px;height:40px;border-radius:9px;background:#fde5aa"></div>
<div class="t" style="left:1182px;top:707px;font-size:26px;color:#4e4e4e">外部申请</div>
<svg style="left:1306px;top:714px" width="16" height="12"><path d="M0 0H16L8 12z" fill="#1c2430"/></svg>
<svg style="left:1385px;top:705px" width="16" height="28"><path d="M12.3 3L3 26" stroke="#555" stroke-width="1.9" stroke-linecap="round"/></svg>
<div class="a" style="left:1452px;top:700px;width:184px;height:40px;border-radius:9px;background:#f69b73"></div>
<div class="t" style="left:1452px;top:707px;width:148px;text-align:center;font-size:26px;color:#7f7f7f">面试中</div>
<svg style="left:1609px;top:714px" width="16" height="12"><path d="M0 0H16L8 12z" fill="#1c2430"/></svg>
<div class="t" style="left:1642px;top:707px;width:192px;text-align:center;font-size:26px;color:#4e4e4e">2021/11/13</div>
<div class="t" style="left:1836px;top:707px;width:128px;text-align:center;font-size:26px;color:#4e4e4e"><span class="ast">***</span></div>
<div class="t" style="left:1966px;top:707px;width:132px;text-align:center;font-size:26px;color:#4e4e4e"><span class="ast">***</span></div>
<svg style="left:2262px;top:715px" width="16" height="12"><path d="M0 0H16L8 12z" fill="#a6a6a6"/></svg>
<div class="t" style="left:128px;top:755px;width:62px;text-align:center;font-size:26px;color:#4e4e4e">4</div>
<div class="t" style="left:192px;top:755px;width:112px;text-align:center;font-size:26px;color:#4e4e4e">李六六</div>
<div class="t" style="left:306px;top:755px;width:144px;text-align:center;font-size:26px;color:#4e4e4e">189<span class="ast">***</span>004</div>
<div class="t" style="left:452px;top:755px;width:260px;text-align:center;font-size:26px;color:#4e4e4e">ding4@dingtalk.com</div>
<div class="t" style="left:714px;top:755px;width:178px;text-align:center;font-size:26px;color:#4e4e4e">产品经理</div>
<svg style="left:931px;top:755px" width="23" height="28" viewBox="0 0 23 28"><path d="M3 0H15.5L23 7.5V25a3 3 0 0 1-3 3H3a3 3 0 0 1-3-3V3a3 3 0 0 1 3-3z" fill="#ea552b"/><text x="11.5" y="19.2" font-size="9.6" font-weight="bold" font-family="Liberation Sans" fill="#fff" text-anchor="middle">PDF</text></svg>
<div class="t" style="left:964px;top:755px;font-size:26px;color:#4e4e4e">李六六简历.pdf</div>
<div class="a" style="left:964px;top:783px;width:176px;height:2px;background:#555"></div>
<div class="a" style="left:1172px;top:748px;width:160px;height:40px;border-radius:9px;background:#fde5aa"></div>
<div class="t" style="left:1182px;top:755px;font-size:26px;color:#4e4e4e">外部申请</div>
<svg style="left:1306px;top:762px" width="16" height="12"><path d="M0 0H16L8 12z" fill="#1c2430"/></svg>
<svg style="left:1385px;top:753px" width="16" height="28"><path d="M12.3 3L3 26" stroke="#555" stroke-width="1.9" stroke-linecap="round"/></svg>
<div class="a" style="left:1452px;top:748px;width:184px;height:40px;border-radius:9px;background:#fde1d9"></div>
<div class="t" style="left:1452px;top:755px;width:148px;text-align:center;font-size:26px;color:#7f7f7f">通过</div>
<svg style="left:1609px;top:762px" width="16" height="12"><path d="M0 0H16L8 12z" fill="#1c2430"/></svg>
<div class="t" style="left:1642px;top:755px;width:192px;text-align:center;font-size:26px;color:#4e4e4e">2021/11/13</div>
<div class="t" style="left:1836px;top:755px;width:128px;text-align:center;font-size:26px;color:#4e4e4e"><span class="ast">***</span></div>
<div class="t" style="left:1966px;top:755px;width:132px;text-align:center;font-size:26px;color:#4e4e4e"><span class="ast">***</span></div>
<div class="a" style="left:2104px;top:748px;width:184px;height:40px;border-radius:9px;background:#fcd9dd"></div>
<div class="t" style="left:2104px;top:755px;width:148px;text-align:center;font-size:26px;color:#4e4e4e">录用</div>
<svg style="left:2262px;top:762px" width="16" height="12"><path d="M0 0H16L8 12z" fill="#1c2430"/></svg>
<div class="t" style="left:128px;top:803px;width:62px;text-align:center;font-size:26px;color:#4e4e4e">5</div>
<div class="t" style="left:192px;top:803px;width:112px;text-align:center;font-size:26px;color:#4e4e4e">刘七七</div>
<div class="t" style="left:306px;top:803px;width:144px;text-align:center;font-size:26px;color:#4e4e4e">189<span class="ast">***</span>005</div>
<div class="t" style="left:452px;top:803px;width:260px;text-align:center;font-size:26px;color:#4e4e4e">ding5@dingtalk.com</div>
<div class="t" style="left:714px;top:803px;width:178px;text-align:center;font-size:26px;color:#4e4e4e">财务专员</div>
<svg style="left:931px;top:803px" width="23" height="28" viewBox="0 0 23 28"><path d="M3 0H15.5L23 7.5V25a3 3 0 0 1-3 3H3a3 3 0 0 1-3-3V3a3 3 0 0 1 3-3z" fill="#ea552b"/><text x="11.5" y="19.2" font-size="9.6" font-weight="bold" font-family="Liberation Sans" fill="#fff" text-anchor="middle">PDF</text></svg>
<div class="t" style="left:964px;top:803px;font-size:26px;color:#4e4e4e">刘七七简历.pdf</div>
<div class="a" style="left:964px;top:831px;width:176px;height:2px;background:#555"></div>
<div class="a" style="left:1172px;top:796px;width:160px;height:40px;border-radius:9px;background:#c1caf2"></div>
<div class="t" style="left:1182px;top:803px;font-size:26px;color:#4e4e4e">内部推荐</div>
<svg style="left:1306px;top:810px" width="16" height="12"><path d="M0 0H16L8 12z" fill="#1c2430"/></svg>
<div class="t" style="left:1338px;top:803px;width:108px;text-align:center;font-size:26px;color:#4e4e4e">钉三多</div>
<div class="a" style="left:1452px;top:796px;width:184px;height:40px;border-radius:9px;background:#f36c3b"></div>
<div class="t" style="left:1452px;top:803px;width:148px;text-align:center;font-size:26px;color:#7f7f7f">筛选中</div>
<svg style="left:1609px;top:810px" width="16" height="12"><path d="M0 0H16L8 12z" fill="#1c2430"/></svg>
<div class="t" style="left:1642px;top:803px;width:192px;text-align:center;font-size:26px;color:#4e4e4e">2021/11/13</div>
<svg style="left:2262px;top:811px" width="16" height="12"><path d="M0 0H16L8 12z" fill="#a6a6a6"/></svg>
<svg style="left:1306px;top:858px" width="16" height="12"><path d="M0 0H16L8 12z" fill="#a6a6a6"/></svg>
<svg style="left:1609px;top:858px" width="16" height="12"><path d="M0 0H16L8 12z" fill="#a6a6a6"/></svg>
<svg style="left:2262px;top:858px" width="16" height="12"><path d="M0 0H16L8 12z" fill="#a6a6a6"/></svg>
<svg style="left:1306px;top:902px" width="16" height="12"><path d="M0 0H16L8 12z" fill="#a6a6a6"/></svg>
<svg style="left:1609px;top:902px" width="16" height="12"><path d="M0 0H16L8 12z" fill="#a6a6a6"/></svg>
<svg style="left:2262px;top:902px" width="16" height="12"><path d="M0 0H16L8 12z" fill="#a6a6a6"/></svg>
<svg style="left:1306px;top:946px" width="16" height="12"><path d="M0 0H16L8 12z" fill="#a6a6a6"/></svg>
<svg style="left:1609px;top:946px" width="16" height="12"><path d="M0 0H16L8 12z" fill="#a6a6a6"/></svg>
<svg style="left:2262px;top:946px" width="16" height="12"><path d="M0 0H16L8 12z" fill="#a6a6a6"/></svg>
<svg style="left:1306px;top:990px" width="16" height="12"><path d="M0 0H16L8 12z" fill="#a6a6a6"/></svg>
<svg style="left:1609px;top:990px" width="16" height="12"><path d="M0 0H16L8 12z" fill="#a6a6a6"/></svg>
<svg style="left:2262px;top:990px" width="16" height="12"><path d="M0 0H16L8 12z" fill="#a6a6a6"/></svg>
<svg style="left:1306px;top:1034px" width="16" height="12"><path d="M0 0H16L8 12z" fill="#a6a6a6"/></svg>
<svg style="left:1609px;top:1034px" width="16" height="12"><path d="M0 0H16L8 12z" fill="#a6a6a6"/></svg>
<svg style="left:2262px;top:1034px" width="16" height="12"><path d="M0 0H16L8 12z" fill="#a6a6a6"/></svg>
<svg style="left:1306px;top:1078px" width="16" height="12"><path d="M0 0H16L8 12z" fill="#a6a6a6"/></svg>
<svg style="left:1609px;top:1078px" width="16" height="12"><path d="M0 0H16L8 12z" fill="#a6a6a6"/></svg>
<svg style="left:2262px;top:1078px" width="16" height="12"><path d="M0 0H16L8 12z" fill="#a6a6a6"/></svg>
<svg style="left:1306px;top:1122px" width="16" height="12"><path d="M0 0H16L8 12z" fill="#a6a6a6"/></svg>
<svg style="left:1609px;top:1122px" width="16" height="12"><path d="M0 0H16L8 12z" fill="#a6a6a6"/></svg>
<svg style="left:2262px;top:1122px" width="16" height="12"><path d="M0 0H16L8 12z" fill="#a6a6a6"/></svg>
<svg style="left:1306px;top:1166px" width="16" height="12"><path d="M0 0H16L8 12z" fill="#a6a6a6"/></svg>
<svg style="left:1609px;top:1166px" width="16" height="12"><path d="M0 0H16L8 12z" fill="#a6a6a6"/></svg>
<svg style="left:2262px;top:1166px" width="16" height="12"><path d="M0 0H16L8 12z" fill="#a6a6a6"/></svg>
<svg style="left:1306px;top:1210px" width="16" height="12"><path d="M0 0H16L8 12z" fill="#a6a6a6"/></svg>
<svg style="left:1609px;top:1210px" width="16" height="12"><path d="M0 0H16L8 12z" fill="#a6a6a6"/></svg>
<svg style="left:2262px;top:1210px" width="16" height="12"><path d="M0 0H16L8 12z" fill="#a6a6a6"/></svg>
<svg style="left:1306px;top:1254px" width="16" height="12"><path d="M0 0H16L8 12z" fill="#a6a6a6"/></svg>
<svg style="left:1609px;top:1254px" width="16" height="12"><path d="M0 0H16L8 12z" fill="#a6a6a6"/></svg>
<svg style="left:2262px;top:1254px" width="16" height="12"><path d="M0 0H16L8 12z" fill="#a6a6a6"/></svg>
<svg style="left:1306px;top:1298px" width="16" height="12"><path d="M0 0H16L8 12z" fill="#a6a6a6"/></svg>
<svg style="left:1609px;top:1298px" width="16" height="12"><path d="M0 0H16L8 12z" fill="#a6a6a6"/></svg>
<svg style="left:2262px;top:1298px" width="16" height="12"><path d="M0 0H16L8 12z" fill="#a6a6a6"/></svg>
<div class="a" style="left:1639px;top:791px;width:198px;height:52px;border:3px solid #0a84ff"></div>
<div class="a" style="left:1832px;top:838px;width:10px;height:10px;background:#0a84ff;border:1px solid #fff"></div>
<div class="a" style="left:2293px;top:388px;width:55px;height:937px;background:#fff"></div>
<div class="a" style="left:2324px;top:404px;width:16px;height:50px;border-radius:8px;background:#c9c9c9"></div>
<div class="a" style="left:144px;top:1302px;width:706px;height:16px;border-radius:8px;background:#c9c9c9"></div>
<div class="a" style="left:0;top:1325px;width:2348px;height:69px;background:#f3f4f6"></div>
<svg style="left:51px;top:1346px" width="34" height="26" viewBox="0 0 34 26"><path d="M0 2H4M0 12.5H4M0 23H4M9 2H33M9 12.5H33M9 23H33" stroke="#1f2329" stroke-width="2.3"/></svg>
<svg style="left:127px;top:1347px" width="26" height="26"><path d="M13 0V26M0 13H26" stroke="#1f2329" stroke-width="2.3"/></svg>
<div class="a" style="left:184px;top:1326px;width:120px;height:68px;background:#fff;box-shadow:6px 0 8px -4px rgba(0,0,0,0.12),-6px 0 8px -4px rgba(0,0,0,0.12)"></div>
<div class="t" style="left:218px;top:1348px;font-size:25px;color:#0a84ff">明细</div>
<div class="a" style="left:1862px;top:1325px;width:2px;height:69px;background:#dedfe1"></div>
<div class="a" style="left:2072px;top:1325px;width:2px;height:69px;background:#dedfe1"></div>
<svg style="left:1889px;top:1357px" width="26" height="3"><path d="M0 1.5H26" stroke="#1f2329" stroke-width="2.3"/></svg>
<div class="t" style="left:1934px;top:1348px;font-size:26px;color:#1f2329">100%</div>
<svg style="left:2021px;top:1346px" width="26" height="26"><path d="M13 0V26M0 13H26" stroke="#1f2329" stroke-width="2.3"/></svg>
<svg style="left:2097px;top:1346px" width="34" height="28" viewBox="0 0 34 28"><path d="M2 9H32M2 15H32" stroke="#c4c4c4" stroke-width="5"/><path d="M10 2V26" stroke="#c4c4c4" stroke-width="6"/><rect x="1.2" y="1.2" width="31.6" height="25.6" rx="2" fill="none" stroke="#1f2329" stroke-width="2.3"/></svg>
<svg style="left:2144px;top:1356px" width="15" height="9" viewBox="0 0 15 9"><path d="M1 1l6.5 6.5L14 1" fill="none" stroke="#888" stroke-width="1.8"/></svg>
<svg style="left:2192px;top:1346px" width="32" height="26" viewBox="0 0 32 26"><rect x="1.2" y="1.2" width="29.6" height="23.6" rx="2" fill="none" stroke="#1f2329" stroke-width="2.3"/><path d="M6 8H10M13 8H19M22 8H26M6 13H14M17 13H26M10 19H22" stroke="#1f2329" stroke-width="2"/></svg>
<svg style="left:2263px;top:1343px" width="34" height="34" viewBox="0 0 34 34"><circle cx="17" cy="17" r="15.5" fill="none" stroke="#1f2329" stroke-width="2.3"/><path d="M12 13a5 5 0 1 1 7 4.5c-1.5 .8-2 1.5-2 3V22" fill="none" stroke="#1f2329" stroke-width="2.3"/><circle cx="17" cy="26" r="1.6" fill="#1f2329"/></svg>
</div></body></html>
